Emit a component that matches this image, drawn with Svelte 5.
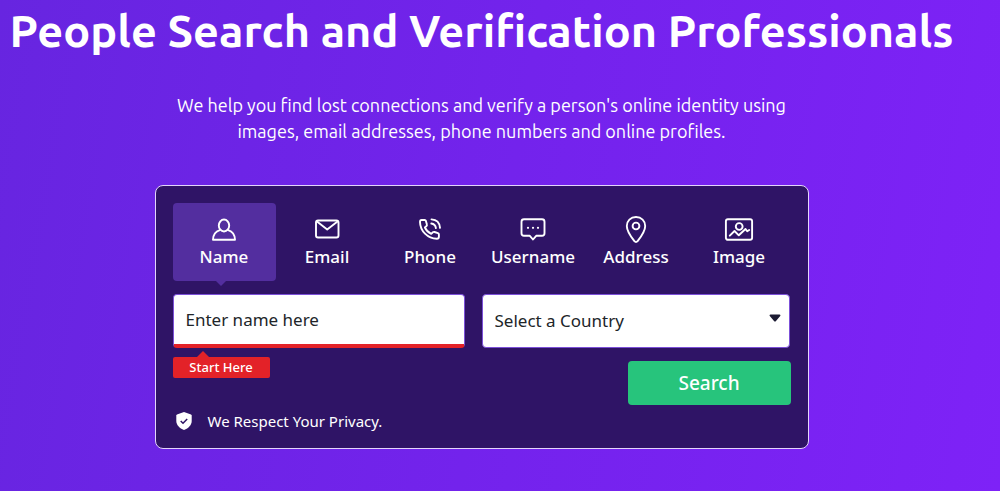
<script lang="ts">
	type Tab = { id: string; label: string; placeholder: string };

	const tabs: Tab[] = [
		{ id: "name", label: "Name", placeholder: "Enter name here" },
		{ id: "email", label: "Email", placeholder: "Enter email here" },
		{ id: "phone", label: "Phone", placeholder: "Enter phone here" },
		{ id: "username", label: "Username", placeholder: "Enter username here" },
		{ id: "address", label: "Address", placeholder: "Enter address here" },
		{ id: "image", label: "Image", placeholder: "Enter image URL here" },
	];

	let active = tabs[0];
	let query = "";
	let country = "";
</script>

<main class="hero">
	<h1>People Search and Verification Professionals</h1>
	<p class="intro">
		We help you find lost connections and verify a person's online identity using
		images, email addresses, phone numbers and online profiles.
	</p>

	<form class="card" on:submit|preventDefault>
		<div class="tabs">
			{#each tabs as tab}
				<button
					type="button"
					class="tab"
					class:active={tab === active}
					aria-pressed={tab === active}
					on:click={() => active = tab}
				>
					<svg class="icon" viewBox="0 0 30 28" aria-hidden="true">
						{#if tab.id === "name"}
							<ellipse cx="15" cy="10.500" rx="5.200" ry="6" />
							<path d="M10.800 15.200C6.800 16.500 4.200 19.500 4 24.700h22c-.2-5.200-2.800-8.200-6.800-9.500" />
						{:else if tab.id === "email"}
							<rect x="4" y="5.500" width="22.500" height="17" rx="2" />
							<path d="M5 6.500l10.200 8 10.300-8" />
						{:else if tab.id === "phone"}
							<path d="M6.500 5h3.200c.6 0 1 .3 1.200.9l1 3.600c.2.6 0 1.100-.4 1.500l-1.600 1.500c1.300 3 3.300 5 6.300 6.400l1.700-1.600c.5-.4 1-.5 1.600-.3l3.400 1.200c.6.2 1 .7 1 1.300v2.300c0 1.100-.9 1.900-2 1.900C12.500 23.500 5.200 16 5 7c0-1.100.5-2 1.500-2z" />
							<path d="M16.300 8.500c2.600.3 4.300 2 4.600 4.600M16.500 4.400c4.900.3 8.100 3.500 8.500 8.400" />
						{:else if tab.id === "username"}
							<path d="M6 4.200h18a2.500 2.500 0 0 1 2.500 2.500v11.600a2.500 2.500 0 0 1-2.500 2.500h-5.800L15 24.500l-3.200-3.700H6a2.500 2.500 0 0 1-2.500-2.500V6.700A2.500 2.500 0 0 1 6 4.200z" />
							<path class="dots" d="M10 12.800h.01M15 12.800h.01M20 12.800h.01" />
						{:else if tab.id === "address"}
							<path d="M15 2C9.600 2 5.800 5.900 5.800 11c0 5.200 4.700 11.500 7.600 15.200.9 1 2.300 1 3.200 0 2.900-3.700 7.600-10 7.600-15.200 0-5.100-3.800-9-9.200-9z" />
							<circle cx="15" cy="11" r="3.400" />
						{:else}
							<rect x="1.900" y="4.200" width="26.200" height="20.600" rx="2" />
							<circle cx="15.200" cy="11.500" r="3.400" />
							<path d="M5.800 20.700l4.700-4.700 4.300 4.300 6.700-6.300 1.700 2.300 2-1.300" />
						{/if}
					</svg>
					<span>{tab.label}</span>
				</button>
			{/each}
		</div>

		<div class="fields">
			<input class="field query" type="text" aria-label={active.label} placeholder={active.placeholder} bind:value={query} />
			<div class="country">
				<select class="field" aria-label="Country" bind:value={country}>
					<option value="">Select a Country</option>
					<option value="us">United States</option>
					<option value="gb">United Kingdom</option>
				</select>
				<svg class="caret" viewBox="0 0 12 8" aria-hidden="true">
					<path d="M1.500.5h9c.9 0 1.200.8.7 1.400L7 7c-.6.700-1.400.7-2 0L.8 1.900C.3 1.300.6.5 1.500.5z" />
				</svg>
			</div>
		</div>

		<div class="actions">
			<span class="hint">Start Here</span>
			<button class="search" type="submit">Search</button>
		</div>

		<div class="privacy">
			<svg viewBox="0 0 16 18" aria-hidden="true">
				<path fill="#fff" d="M8 0l7 2.500c.4.200.7.500.7 1V9c0 4-3.200 7.300-7.700 9C3.500 16.300.3 13 .3 9V3.500c0-.5.3-.8.7-1z" />
				<path fill="none" stroke="#2f1466" stroke-width="1.500" d="M4.700 9l2.300 2.200 4.200-4.300" />
			</svg>
			<span>We Respect Your Privacy.</span>
		</div>
	</form>
</main>

<style>
:global(body) {
	margin: 0;
}

.hero {
	box-sizing: border-box;
	min-height: 100vh;
	padding: 0 37px 42px 0;
	display: flex;
	flex-direction: column;
	align-items: center;
	background: linear-gradient(100deg, #6725e0, #7323ec 50%, #7e22f7);
	color: #fff;
	font-family: "Noto Sans", "Open Sans", sans-serif;
}

h1 {
	margin: 0;
	font-family: Ubuntu, "Noto Sans", sans-serif;
	font-size: 45px;
	line-height: 62px;
	font-weight: 700;
	text-align: center;
}

.intro {
	max-width: 640px;
	margin: 30px 0 0;
	font-family: Ubuntu, "Noto Sans", sans-serif;
	font-size: 18px;
	font-weight: 400;
	line-height: 26px;
	text-align: center;
}

.card {
	box-sizing: border-box;
	width: 100%;
	max-width: 654px;
	margin-top: 41px;
	padding: 17px 17px 16px;
	border: 1px solid #e3d4fb;
	border-radius: 8px;
	background: #2f1466;
}

.tabs {
	display: grid;
	grid-template-columns: repeat(6, 1fr);
}

.tab {
	position: relative;
	display: flex;
	flex-direction: column;
	align-items: center;
	gap: 1px;
	padding: 12px 0 11px;
	border: 0;
	border-radius: 4px;
	background: none;
	color: #fff;
	font: 500 17px/26px "Noto Sans", "Open Sans", sans-serif;
	cursor: pointer;
}

.active {
	background: #532e9f;
}

.active::after {
	content: "";
	position: absolute;
	top: 100%;
	left: 50%;
	margin-left: -8px;
	border: 5px solid transparent;
	border-top-color: #532e9f;
	border-bottom: 0;
}

.icon {
	width: 30px;
	height: 28px;
	fill: none;
	stroke: #fff;
	stroke-width: 1.9;
	stroke-linecap: round;
	stroke-linejoin: round;
}

.dots {
	stroke-width: 2.2;
}

.fields {
	display: grid;
	grid-template-columns: 292fr 308fr;
	gap: 17px;
	margin: 13px 1px 0 0;
}

.field {
	box-sizing: border-box;
	width: 100%;
	height: 54px;
	padding: 0 12px;
	border: 1px solid #7c50d8;
	border-radius: 4px;
	background: #fff;
	color: #212529;
	font: 17px/26px "Noto Sans", "Open Sans", sans-serif;
	appearance: none;
}

.field::placeholder {
	color: #212529;
	opacity: 1;
}

.query {
	border-bottom: 4px solid #e32228;
}

.country {
	position: relative;
}

.caret {
	position: absolute;
	top: 20px;
	right: 9px;
	width: 12px;
	height: 8px;
	fill: #1c1b33;
	pointer-events: none;
}

.actions {
	display: flex;
	align-items: flex-start;
	justify-content: space-between;
	margin-top: 13px;
}

.hint {
	position: relative;
	width: 97px;
	margin-top: -4px;
	border-radius: 2px;
	background: #e32228;
	font-size: 13px;
	line-height: 21px;
	font-weight: 500;
	text-align: center;
}

.hint::before {
	content: "";
	position: absolute;
	bottom: 100%;
	left: 24px;
	border: 6px solid transparent;
	border-bottom-color: #e32228;
	border-top: 0;
}

.search {
	width: 163px;
	height: 44px;
	padding: 0;
	border: 0;
	border-radius: 4px;
	background: #27c47c;
	color: #fff;
	font: 500 19px/26px "Noto Sans", "Open Sans", sans-serif;
	cursor: pointer;
}

.privacy {
	display: flex;
	align-items: center;
	gap: 16px;
	margin: 5px 3px 0;
	font-size: 15px;
	line-height: 22px;
}

.privacy svg {
	width: 16px;
	height: 18px;
}
</style>
